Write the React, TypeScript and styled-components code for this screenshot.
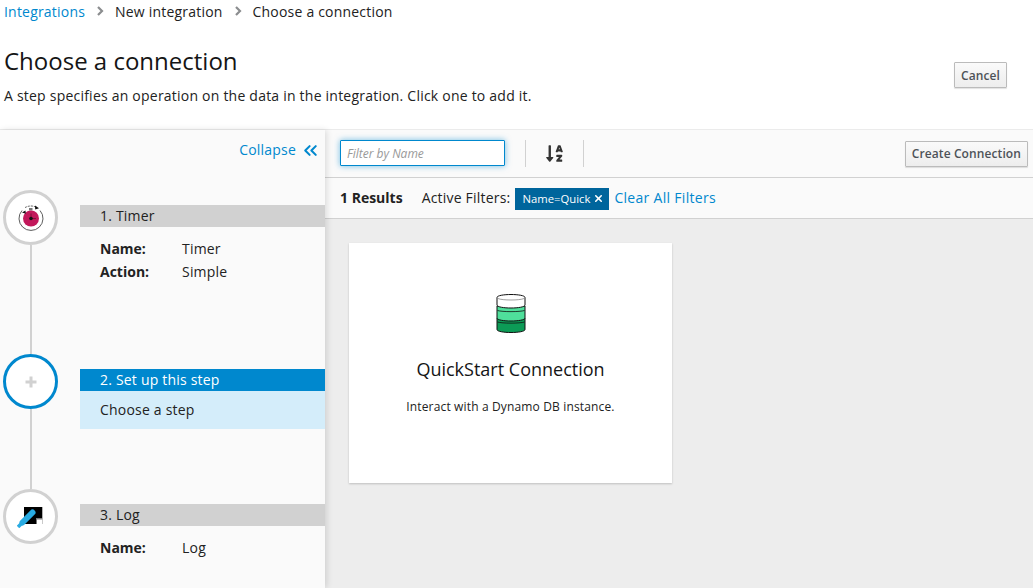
import React from "react";
import styled, { createGlobalStyle } from "styled-components";
import { ChevronsLeft, X } from "lucide-react";
import { FaSortAlphaDown } from "react-icons/fa";

const GlobalStyle = createGlobalStyle`
  html, body {
    margin: 0;
    padding: 0;
    background: #fff;
  }
  * {
    box-sizing: border-box;
  }
  body {
    font-family: "Open Sans", "Noto Sans", sans-serif;
    color: #151515;
    font-size: 14px;
    letter-spacing: 0.2px;
  }
`;

const Page = styled.div`
  width: 1033px;
  height: 588px;
  overflow: hidden;
  display: flex;
  flex-direction: column;
`;

const Header = styled.header`
  height: 130px;
  flex: none;
  border-bottom: 1px solid #ebebeb;
  padding: 0 26px 0 4px;
  display: flex;
  flex-direction: column;
`;

const Breadcrumb = styled.nav`
  height: 22px;
  display: flex;
  align-items: center;
  font-size: 14px;
  color: #222;
`;

const Crumb = styled.span<{ $link?: boolean }>`
  color: ${(p) => (p.$link ? "#0088ce" : "#222")};
`;

const CrumbSep = styled.span`
  width: 30px;
  display: flex;
  justify-content: center;
  color: #8b8d8f;
`;

const TitleRow = styled.div`
  display: flex;
  justify-content: space-between;
  align-items: flex-start;
`;

const Title = styled.h1`
  margin: 22px 0 0;
  font-size: 24px;
  line-height: 34px;
  font-weight: 400;
  letter-spacing: 0;
  color: #151515;
`;

const Subtitle = styled.p`
  margin: 8px 0 0;
  font-size: 14px;
  line-height: 20px;
  letter-spacing: 0.22px;
  color: #222;
`;

const Button = styled.button`
  font-family: inherit;
  font-size: 12px;
  font-weight: 600;
  letter-spacing: 0.1px;
  color: #4d5258;
  height: 26px;
  padding: 0 6px;
  background: linear-gradient(#fafafa, #ededed);
  border: 1px solid #bbb;
  border-radius: 1px;
  box-shadow: 0 1px 1px rgba(3, 3, 3, 0.12);
  white-space: nowrap;
`;

const CancelButton = styled(Button)`
  margin-top: 40px;
  width: 53px;
`;

const Body = styled.div`
  flex: 1;
  min-height: 0;
  display: flex;
`;

const Sidebar = styled.aside`
  width: 325px;
  flex: none;
  background: #fafafa;
  position: relative;
  z-index: 1;
  box-shadow: 2px 0 6px rgba(3, 3, 3, 0.12);
`;

const CollapseRow = styled.div`
  height: 60px;
  padding: 8px 4px 0 0;
  display: flex;
  justify-content: flex-end;
  align-items: flex-start;
  gap: 4px;
  color: #0088ce;
  line-height: 24px;
`;

const CollapseIcon = styled.span`
  display: flex;
  height: 24px;
  align-items: center;
`;

const Step = styled.section<{ $height: number }>`
  height: ${(p) => p.$height}px;
  display: grid;
  grid-template-columns: 80px 1fr;
`;

const Rail = styled.div`
  width: 61px;
  display: flex;
  flex-direction: column;
  align-items: center;
`;

const Circle = styled.div<{ $active?: boolean }>`
  width: 55px;
  height: 55px;
  flex: none;
  border-radius: 50%;
  background: #fff;
  border: 3px solid ${(p) => (p.$active ? "#0088ce" : "#d1d1d1")};
  display: flex;
  align-items: center;
  justify-content: center;
  color: #d1d1d1;
`;

const Connector = styled.div`
  width: 2px;
  margin-left: 1px;
  flex: 1;
  background: #d1d1d1;
`;

const Details = styled.div`
  padding-top: 15px;
`;

const StepTitle = styled.div<{ $active?: boolean }>`
  height: 22px;
  padding-left: 20px;
  line-height: 22px;
  background: ${(p) => (p.$active ? "#0088ce" : "#d1d1d1")};
  color: ${(p) => (p.$active ? "#fff" : "#222")};
`;

const StepBody = styled.div`
  height: 38px;
  padding-left: 20px;
  line-height: 38px;
  background: #d4edfa;
  color: #222;
`;

const Props = styled.dl`
  margin: 12px 0 0 20px;
  display: grid;
  grid-template-columns: 82px 1fr;
  row-gap: 3px;
  line-height: 20px;
`;

const PropName = styled.dt`
  font-weight: 700;
  letter-spacing: 0;
  color: #222;
`;

const PropValue = styled.dd`
  margin: 0;
  color: #222;
`;

const Main = styled.main`
  flex: 1;
  min-width: 0;
  background: #ededed;
  display: flex;
  flex-direction: column;
`;

const Toolbar = styled.div`
  height: 48px;
  flex: none;
  background: #fafafa;
  border-bottom: 1px solid #d1d1d1;
  display: flex;
  align-items: center;
  padding: 0 5px 0 15px;
`;

const FilterInput = styled.input`
  width: 165px;
  height: 26px;
  margin-bottom: 1px;
  margin-right: 20px;
  padding: 0 6px;
  font-family: inherit;
  font-size: 12px;
  border: 1px solid #0088ce;
  border-radius: 1px;
  outline: none;
  background: #fff;
  box-shadow: 0 0 6px rgba(0, 136, 206, 0.55);

  &::placeholder {
    color: #999;
    font-style: italic;
    opacity: 1;
  }
`;

const Divider = styled.div`
  width: 1px;
  height: 27px;
  background: #d1d1d1;
`;

const SortButton = styled.div`
  width: 57px;
  display: flex;
  justify-content: center;
  color: #333;
`;

const Spacer = styled.div`
  flex: 1;
`;

const ResultsBar = styled.div`
  height: 41px;
  flex: none;
  background: #fafafa;
  border-bottom: 1px solid #d1d1d1;
  display: flex;
  align-items: center;
  padding: 0 0 2px 15px;
`;

const Count = styled.strong`
  font-weight: 700;
  letter-spacing: 0;
  color: #222;
  margin-right: 19px;
`;

const FilterLabel = styled.span`
  color: #222;
  margin-right: 5px;
`;

const Tag = styled.span`
  height: 22px;
  margin-top: 3px;
  padding: 0 5px 0 7px;
  background: #00659c;
  color: #fff;
  font-size: 11.3px;
  letter-spacing: 0;
  display: flex;
  align-items: center;
  gap: 3px;
`;

const ClearLink = styled.a`
  color: #0088ce;
  letter-spacing: 0.3px;
  margin-left: 5px;
`;

const Content = styled.div`
  flex: 1;
  padding: 24px;
`;

const Card = styled.article`
  width: 323px;
  height: 240px;
  background: #fff;
  box-shadow: 0 1px 2px rgba(3, 3, 3, 0.2);
  display: flex;
  flex-direction: column;
  align-items: center;
  padding-top: 51px;
`;

const CardTitle = styled.h2`
  margin: 23px 0 0;
  font-size: 18px;
  line-height: 26px;
  font-weight: 400;
  letter-spacing: 0;
  color: #151515;
`;

const CardText = styled.p`
  margin: 16px 0 0;
  font-size: 12px;
  line-height: 18px;
  letter-spacing: 0.15px;
  color: #222;
`;

const TimerIcon = () => (
  <svg width="28" height="28" viewBox="0 0 28 28">
    <path d="M5 6.500A12 12 0 1 0 23 6.500" fill="none" stroke="#333" strokeWidth="0.8" />
    <path d="M8 3.600A12 12 0 0 1 20 3.600" fill="none" stroke="#333" strokeWidth="0.8" strokeDasharray="2 1" />
    <rect x="12" y="4" width="3.500" height="2.500" fill="#777" />
    <circle cx="14" cy="14.500" r="8" fill="#c2185b" />
    <path d="M14 14.500h5M14 14.500v-5" stroke="#5a0f2c" strokeWidth="0.7" />
    <circle cx="14" cy="14.500" r="1.800" fill="#111" />
    <path d="M5 8.500l3.500-2 .3 3.200zM18 1.500l4 2.800-3.800 1.200z" fill="#111" />
  </svg>
);

const LogIcon = () => (
  <svg width="27" height="22" viewBox="0 0 27 22">
    <rect x="7" y="1" width="18.300" height="17" fill="#000" />
    <rect x="19" y="12.500" width="6.300" height="5.500" fill="#fff" />
    <path d="M19.500 18v-5h5.800" fill="none" stroke="#777" strokeWidth="1" />
    <path d="M5.500 16.500L15.500 6.500" stroke="#29abe2" strokeWidth="6" strokeLinecap="round" />
    <path d="M1 21l3-3" stroke="#29abe2" strokeWidth="3.500" />
  </svg>
);

const DatabaseIcon = () => (
  <svg width="30" height="39" viewBox="0 0 30 39">
    <path d="M1 24v11.500C1 37.500 8 38.500 15 38.500S29 37.500 29 35.500V24z" fill="#0c9b56" stroke="#111" strokeWidth="1" />
    <path d="M1.500 28C6 29.500 24 29.500 28.500 28" fill="none" stroke="#111" strokeWidth="0.8" />
    <path d="M1 12v12C1 26 8 27 15 27S29 26 29 24V12z" fill="#4fdf9b" stroke="#111" strokeWidth="1" />
    <path d="M1.500 16.500C6 18 24 18 28.500 16.500" fill="none" stroke="#111" strokeWidth="0.8" />
    <path d="M1 3.500C1 1.500 8 .5 15 .5S29 1.500 29 3.500V11C29 13 22 14 15 14S1 13 1 11z" fill="#fff" stroke="#111" strokeWidth="1" />
    <path d="M2 4.500C6 6.500 24 6.500 28 4.500" fill="none" stroke="#888" strokeWidth="0.8" />
  </svg>
);

const PlusIcon = () => (
  <svg width="12" height="12" viewBox="0 0 12 12">
    <path d="M6 0.500v11M0.500 6h11" stroke="currentColor" strokeWidth="3" />
  </svg>
);

const CrumbChevron = () => (
  <svg width="8" height="10" viewBox="0 0 8 10">
    <path d="M2 1l4 4-4 4" fill="none" stroke="currentColor" strokeWidth="2.200" />
  </svg>
);

const App = () => (
  <Page>
    <GlobalStyle />
    <Header>
      <Breadcrumb>
        <Crumb $link>Integrations</Crumb>
        <CrumbSep>
          <CrumbChevron />
        </CrumbSep>
        <Crumb>New integration</Crumb>
        <CrumbSep>
          <CrumbChevron />
        </CrumbSep>
        <Crumb>Choose a connection</Crumb>
      </Breadcrumb>
      <TitleRow>
        <div>
          <Title>Choose a connection</Title>
          <Subtitle>A step specifies an operation on the data in the integration. Click one to add it.</Subtitle>
        </div>
        <CancelButton>Cancel</CancelButton>
      </TitleRow>
    </Header>
    <Body>
      <Sidebar>
        <CollapseRow>
          <span>Collapse</span>
          <CollapseIcon>
            <ChevronsLeft size={21} strokeWidth={2.4} />
          </CollapseIcon>
        </CollapseRow>
        <Step $height={164}>
          <Rail>
            <Circle>
              <TimerIcon />
            </Circle>
            <Connector />
          </Rail>
          <Details>
            <StepTitle>1. Timer</StepTitle>
            <Props>
              <PropName>Name:</PropName>
              <PropValue>Timer</PropValue>
              <PropName>Action:</PropName>
              <PropValue>Simple</PropValue>
            </Props>
          </Details>
        </Step>
        <Step $height={135}>
          <Rail>
            <Circle $active>
              <PlusIcon />
            </Circle>
            <Connector />
          </Rail>
          <Details>
            <StepTitle $active>2. Set up this step</StepTitle>
            <StepBody>Choose a step</StepBody>
          </Details>
        </Step>
        <Step $height={99}>
          <Rail>
            <Circle>
              <LogIcon />
            </Circle>
          </Rail>
          <Details>
            <StepTitle>3. Log</StepTitle>
            <Props>
              <PropName>Name:</PropName>
              <PropValue>Log</PropValue>
            </Props>
          </Details>
        </Step>
      </Sidebar>
      <Main>
        <Toolbar>
          <FilterInput placeholder="Filter by Name" />
          <Divider />
          <SortButton>
            <FaSortAlphaDown size={19} />
          </SortButton>
          <Divider />
          <Spacer />
          <Button>Create Connection</Button>
        </Toolbar>
        <ResultsBar>
          <Count>1 Results</Count>
          <FilterLabel>Active Filters:</FilterLabel>
          <Tag>
            Name=Quick
            <X size={11} strokeWidth={3.5} />
          </Tag>
          <ClearLink>Clear All Filters</ClearLink>
        </ResultsBar>
        <Content>
          <Card>
            <DatabaseIcon />
            <CardTitle>QuickStart Connection</CardTitle>
            <CardText>Interact with a Dynamo DB instance.</CardText>
          </Card>
        </Content>
      </Main>
    </Body>
  </Page>
);

export default App;
